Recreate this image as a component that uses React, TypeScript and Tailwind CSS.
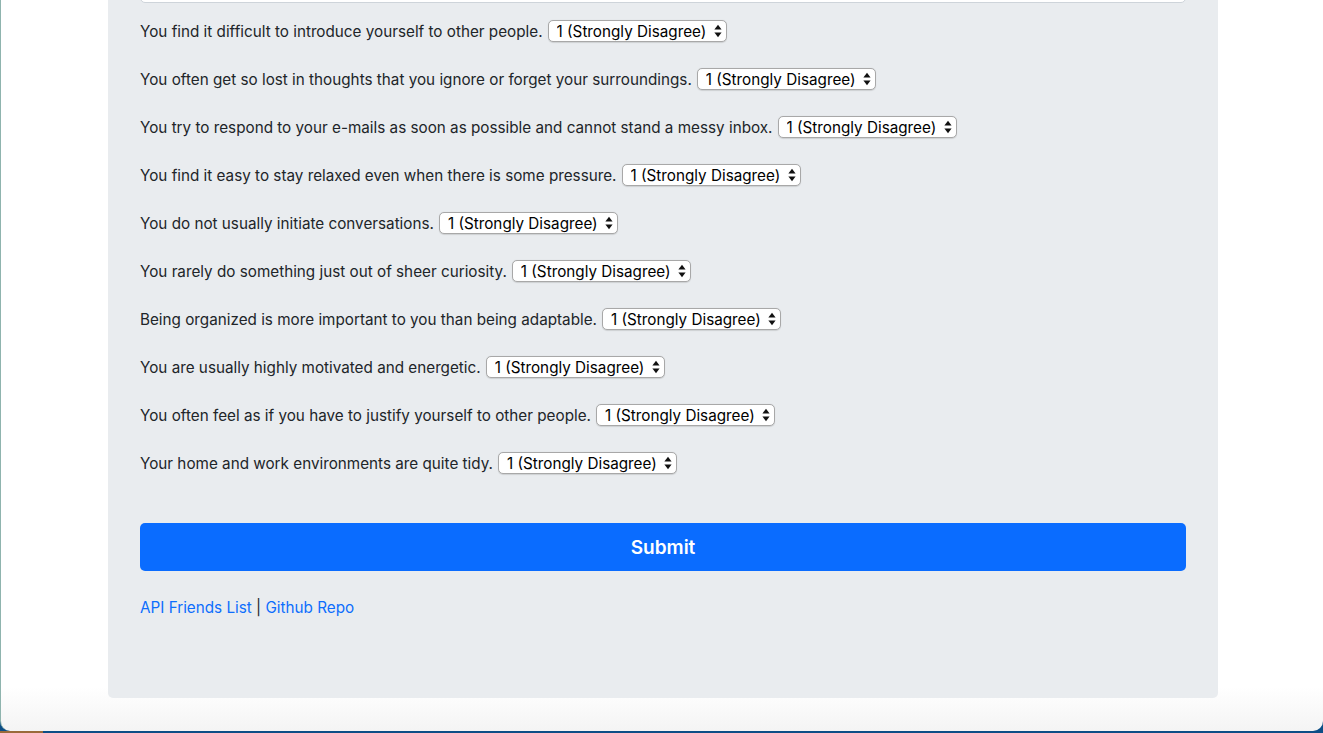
import { useState } from 'react';

const questions = [
  'You find it difficult to introduce yourself to other people.',
  'You often get so lost in thoughts that you ignore or forget your surroundings.',
  'You try to respond to your e-mails as soon as possible and cannot stand a messy inbox.',
  'You find it easy to stay relaxed even when there is some pressure.',
  'You do not usually initiate conversations.',
  'You rarely do something just out of sheer curiosity.',
  'Being organized is more important to you than being adaptable.',
  'You are usually highly motivated and energetic.',
  'You often feel as if you have to justify yourself to other people.',
  'Your home and work environments are quite tidy.',
];

const options = [
  '1 (Strongly Disagree)',
  '2 (Disagree)',
  '3 (Neutral)',
  '4 (Agree)',
  '5 (Strongly Agree)',
];

function AnswerSelect({ value, onChange }: { value: string; onChange: (v: string) => void }) {
  return (
    <span className="relative inline-flex items-center align-middle">
      <select
        value={value}
        onChange={(e) => onChange(e.target.value)}
        className="h-[22px] appearance-none rounded-[5px] border border-[#a8a8a8] bg-white pl-[8px] pr-[19px] pt-[1px] text-[15.25px] leading-[20px] text-black shadow-[0_0.5px_1px_rgba(0,0,0,0.12)] outline-none"
      >
        {options.map((o) => (
          <option key={o} value={o}>
            {o}
          </option>
        ))}
      </select>
      <svg
        className="pointer-events-none absolute right-[5px] top-[4px]"
        width="8"
        height="14"
        viewBox="0 0 8 14"
      >
        <path d="M4 0.8 L7.6 5.6 L0.4 5.6 Z" fill="#111" />
        <path d="M4 13.2 L7.6 8.4 L0.4 8.4 Z" fill="#111" />
      </svg>
    </span>
  );
}

export default function App() {
  const [answers, setAnswers] = useState<string[]>(questions.map(() => options[0]));

  const setAnswer = (index: number, value: string) => {
    setAnswers((prev) => prev.map((a, i) => (i === index ? value : a)));
  };

  return (
    <div
      className="flex h-[733px] w-[1323px] flex-col overflow-hidden bg-[#0d4e86]"
      style={{ fontFamily: 'Inter, "Liberation Sans", sans-serif' }}
    >
      {/* browser window */}
      <div className="flex flex-1 flex-col overflow-hidden rounded-b-[10px] border-l border-[#8fb4ae] bg-gradient-to-b from-white from-[94%] to-[#f4f4f4]">
        <div className="ml-[107px] flex w-[1110px] flex-col rounded-b-[5px] bg-[#e9ecef] px-[32px] pb-[78px] text-[#212529]">
          <div className="-mt-[35px] h-[38px] rounded-[5px] border border-[#ced4da] bg-white" />

          <form className="mt-[17px] flex flex-col gap-[26px]" onSubmit={(e) => e.preventDefault()}>
            {questions.map((q, i) => (
              <label key={q} className="flex h-[22px] items-center gap-[5px] text-[15.25px] leading-[24px]">
                <span className="pt-[2px]">{q}</span>
                <AnswerSelect value={answers[i]} onChange={(v) => setAnswer(i, v)} />
              </label>
            ))}

            <button
              type="submit"
              className="mt-[23px] h-[48px] w-full rounded-[5px] bg-[#0a6cff] pt-[2px] text-[19px] font-semibold text-white"
            >
              Submit
            </button>
          </form>

          <p className="mt-[25px] text-[15.25px] leading-[24px]">
            <a href="#" className="text-[#0d6efd]">
              API Friends List
            </a>
            <span className="text-[#212529]"> | </span>
            <a href="#" className="text-[#0d6efd]">
              Github Repo
            </a>
          </p>
        </div>
      </div>
      {/* desktop strip */}
      <div className="flex h-[2px]">
        <div className="w-[43px] bg-[#9a6a3a]" />
        <div className="flex-1 bg-[#0d4e86]" />
      </div>
    </div>
  );
}
